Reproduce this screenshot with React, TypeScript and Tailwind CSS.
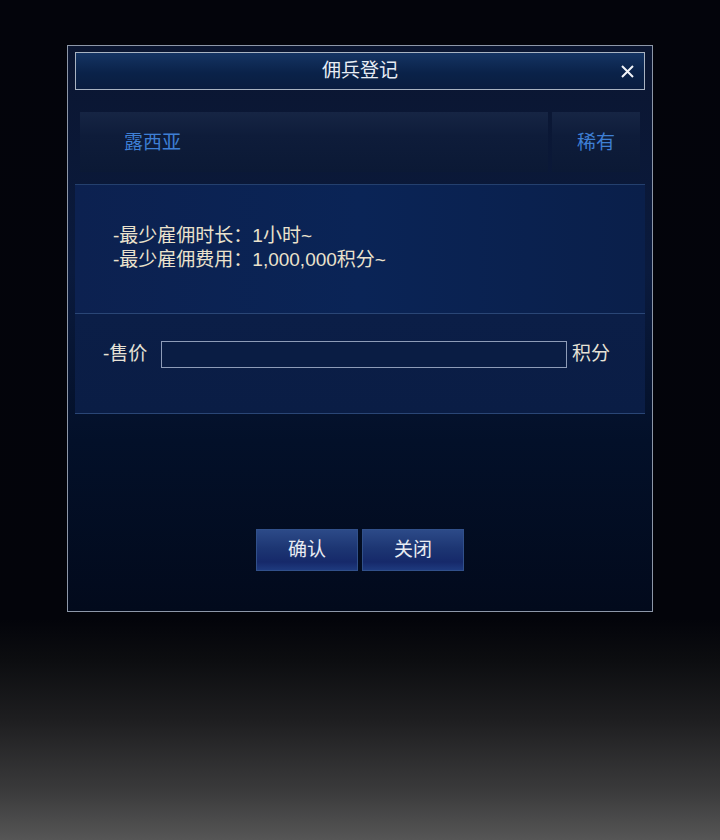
import React from "react";

export default function App() {
  const font = { fontFamily: '"Liberation Sans", "Noto Sans CJK SC", sans-serif' };
  return (
    <div
      className="w-[720px] h-[840px] flex flex-col bg-[linear-gradient(to_bottom,#03040b_0px,#03040a_620px,#0c0d10_660px,#1e1e20_720px,#3a3a3b_790px,#565656_840px)]"
      style={font}
    >
      <div className="ml-[67px] mt-[45px] w-[586px] h-[567px] border border-[#8d97a8] bg-[linear-gradient(to_bottom,#0b1631_0%,#0a1a3d_40%,#031029_70%,#020a1c_100%)] flex flex-col px-[7px]">
        {/* title bar */}
        <div className="mt-[6px] h-[38px] border border-[#a9b3c2] bg-[linear-gradient(to_bottom,#153463,#0a2249_55%,#0a1d40)] relative flex items-center justify-center pt-[1px]">
          <span className="text-[19px] text-[#e8edf5]">佣兵登记</span>
          <svg
            className="absolute right-[10px] top-[12px]"
            width="13"
            height="13"
            viewBox="0 0 13 13"
          >
            <path d="M1 1 L12 12 M12 1 L1 12" stroke="#f2f4f8" strokeWidth="2" />
          </svg>
        </div>

        {/* name row */}
        <div className="mx-[5px] mt-[22px] h-[60px] flex gap-[4px]">
          <div className="flex-1 bg-[linear-gradient(to_bottom,#162544,#0e1c3a_40%,#0b1935)] flex items-center pl-[44px] pt-[2px]">
            <span className="text-[19px] text-[#3e7fd4]">露西亚</span>
          </div>
          <div className="w-[88px] bg-[linear-gradient(to_bottom,#162544,#0e1c3a_40%,#0b1935)] flex items-center justify-center pt-[2px]">
            <span className="text-[19px] text-[#3e7fd4]">稀有</span>
          </div>
        </div>

        {/* info */}
        <div className="mt-[12px] h-[129px] border-t border-[#24406e] bg-[linear-gradient(to_right,#0c2150,#0a2456_50%,#0a1f4a)] flex flex-col justify-center pl-[38px] pb-[3px] text-[19px] leading-[24px] text-[#ebe2cc]">
          <div>-最少雇佣时长：1小时~</div>
          <div>-最少雇佣费用：1,000,000积分~</div>
        </div>

        {/* price */}
        <div className="h-[101px] border-t border-b border-[#2a4676] bg-[linear-gradient(to_bottom,#0b1e47,#0a1d45)] flex items-center pl-[28px] pb-[19px]">
          <span className="text-[19px] text-[#e6e2d6] w-[58px]">-售价</span>
          <div className="w-[406px] h-[27px] border-[1.5px] border-[#8e9cb8] bg-[#0a1d44]" />
          <span className="text-[19px] text-[#e6e2d6] ml-[5px]">积分</span>
        </div>

        {/* buttons */}
        <div className="flex-1 flex items-end justify-center pb-[40px] gap-[4px]">
          <button className="w-[102px] h-[42px] border border-[#31508a] bg-[linear-gradient(to_bottom,#2c4a88,#1d3673_45%,#16296a_80%,#1e3a7e)] text-[19px] text-[#e9ecf2]">
            确认
          </button>
          <button className="w-[102px] h-[42px] border border-[#31508a] bg-[linear-gradient(to_bottom,#2c4a88,#1d3673_45%,#16296a_80%,#1e3a7e)] text-[19px] text-[#e9ecf2]">
            关闭
          </button>
        </div>
      </div>
    </div>
  );
}
